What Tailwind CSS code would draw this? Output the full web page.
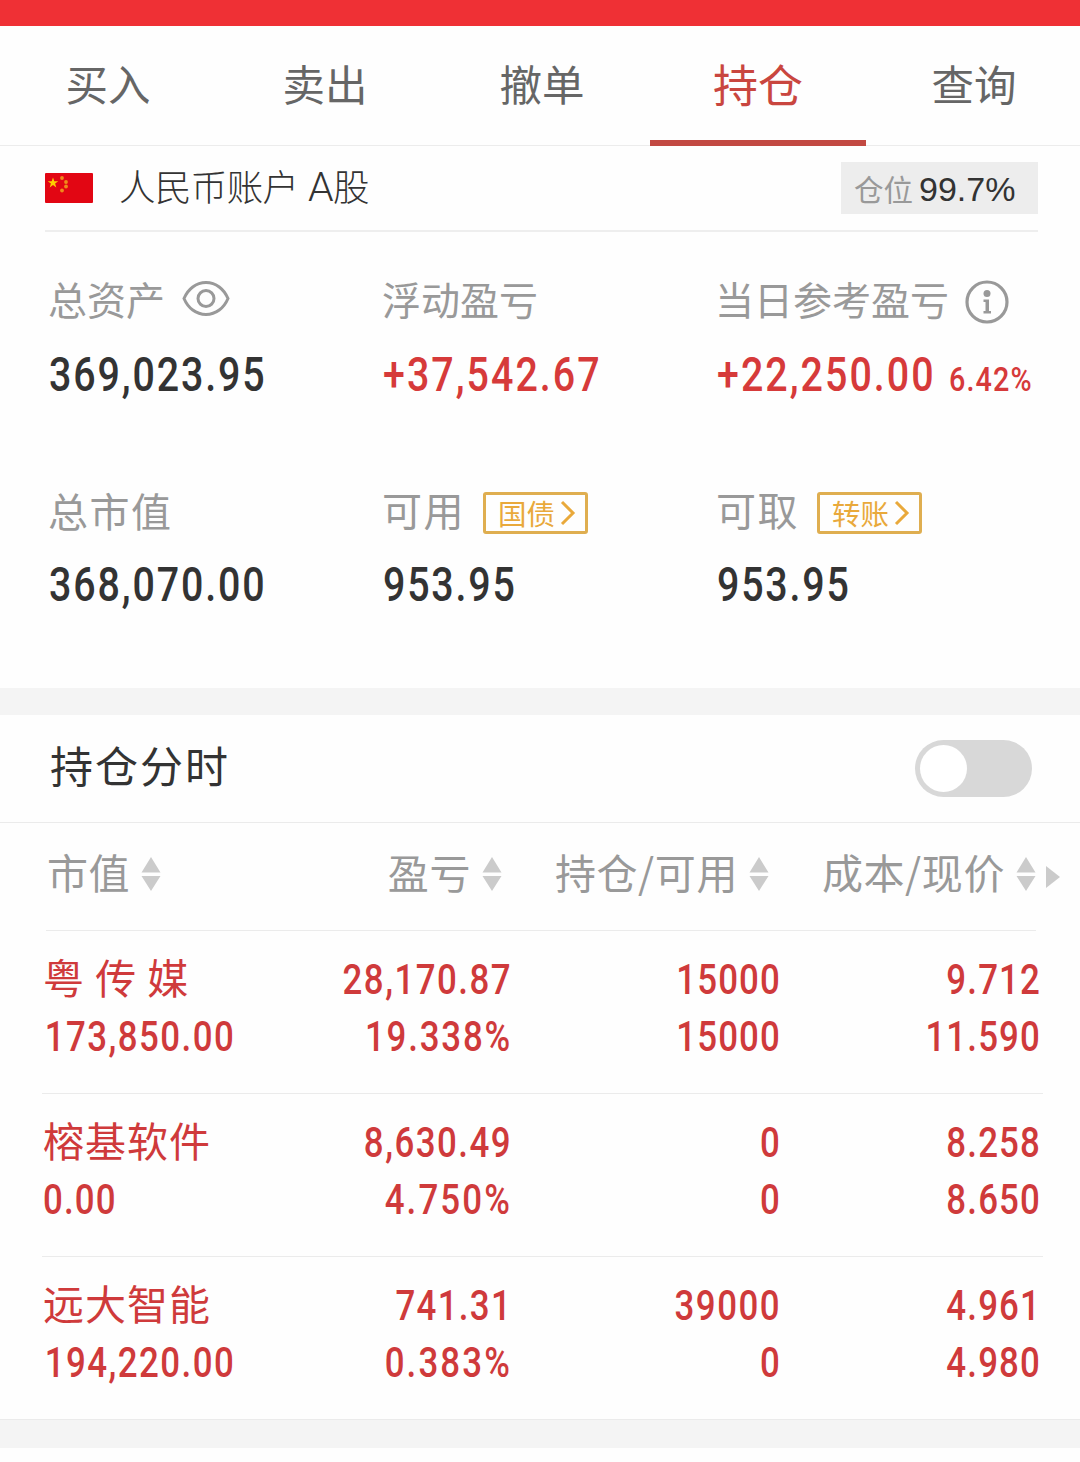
<!DOCTYPE html>
<html lang="zh-CN">
<head>
    <meta charset="UTF-8">
    <meta name="viewport" content="width=device-width, initial-scale=1.0">
    <title>持仓</title>
    <script src="https://cdn.jsdelivr.net/npm/@tailwindcss/browser@4"></script>
</head>
<body class="w-[1080px] h-[1462px] overflow-hidden bg-[#fefefe] font-['Noto_Sans_CJK_SC',sans-serif] text-[#333]">
    <svg class="hidden">
        <symbol id="sort" viewBox="0 0 20 36">
            <path d="M10 1L19.500 16.500H.5zM10 35L.5 20H19.500z" fill="#cbcbcb" />
        </symbol>
    </svg>

    <div class="h-[26px] bg-[#ef3035]"></div>

    <!-- Tabs -->
    <nav class="h-[120px] grid grid-cols-[216px_218px_216px_216px_1fr] border-b border-[#ececec] text-[42.500px] leading-[113px] text-center text-[#666]">
        <div>买入</div>
        <div>卖出</div>
        <div>撤单</div>
        <div class="h-[120px] border-b-6 border-[#c24942] text-[45px] leading-[115px] text-[#c9463f]">持仓</div>
        <div class="pl-[2px]">查询</div>
    </nav>

    <!-- Account -->
    <div class="ml-[45px] w-[993px] h-[86px] flex items-center border-b-2 border-[#eee]">
        <svg class="w-12 h-[30px]" viewBox="0 0 48 30">
            <rect width="48" height="30" rx="1" fill="#e20613" />
            <path d="M8 4.500l1.300 3.700h4l-3.200 2.400 1.200 3.800L8 12.100l-3.300 2.300 1.200-3.800-3.200-2.400h4z" fill="#fdd000" />
            <g fill="#f08a1a">
                <circle cx="17" cy="5" r="1.900" />
                <circle cx="21" cy="9" r="1.900" />
                <circle cx="21" cy="13.500" r="1.900" />
                <circle cx="17" cy="17.500" r="1.900" />
            </g>
        </svg>
        <div class="ml-[26px] h-[52px] leading-[48px] text-[36.500px] font-light tracking-[-0.6px] whitespace-nowrap">人民币账户 <span class="ml-[2px] font-['Roboto'] text-[41px]">A</span>股</div>
        <div class="ml-auto w-[197px] h-[52px] pl-[13px] flex items-center gap-[6px] bg-[#ededed] whitespace-nowrap">
            <span class="text-[29.5px] leading-[50px] text-[#999]">仓位</span>
            <span class="font-['Liberation_Sans'] text-[34px] leading-[56px] pt-[2px]">99.7%</span>
        </div>
    </div>

    <!-- Assets -->
    <section class="h-[456px] pl-[48px] pt-[41px] grid grid-cols-[334px_334px_1fr] grid-rows-[211px_211px] whitespace-nowrap">
        <div>
            <div class="h-[50px] flex items-center text-[39px] leading-[50px] text-[#999]">总资产
                <svg class="ml-[17px] mt-[2px] w-12 h-[38px]" viewBox="0 0 48 38" fill="none" stroke="#999" stroke-width="3">
                    <path d="M2 18.500C6 9 14 2.500 24 2.500S42 9 46 18.500C42 28 34 34.500 24 34.500S6 28 2 18.500z" />
                    <circle cx="24" cy="18.500" r="8" />
                </svg>
            </div>
            <div class="mt-[22px] ml-px h-[60px] leading-[60px] text-[48px] font-medium font-['Roboto'] tracking-[2.3px] origin-left scale-x-[0.82]">369,023.95</div>
        </div>
        <div>
            <div class="h-[50px] text-[39px] leading-[50px] text-[#999]">浮动盈亏</div>
            <div class="mt-[22px] ml-px h-[60px] leading-[60px] text-[48px] font-medium font-['Roboto'] tracking-[2.5px] origin-left scale-x-[0.82] text-[#d63a3a]">+37,542.67</div>
        </div>
        <div>
            <div class="h-[50px] -ml-px flex items-center text-[39px] leading-[50px] text-[#999]">当日参考盈亏
                <svg class="ml-[16px] mt-[8px] w-11 h-11" viewBox="0 0 44 44">
                    <circle cx="22" cy="22" r="20" fill="none" stroke="#999" stroke-width="3.200" />
                    <circle cx="22" cy="13.500" r="3.500" fill="#999" />
                    <path d="M18.500 19.500H24V31H26V33.500H18.500V31H20.500V22H18.500z" fill="#999" />
                </svg>
            </div>
            <div class="mt-[22px] ml-px h-[60px] leading-[60px] flex items-baseline font-medium font-['Roboto'] text-[#d63a3a]">
                <span class="w-[232px] text-[48px] tracking-[2.5px] origin-left scale-x-[0.82]">+22,250.00</span>
                <span class="text-[33px] tracking-[1.3px] origin-left scale-x-[0.87]">6.42%</span>
            </div>
        </div>
        <div>
            <div class="h-[50px] text-[40px] leading-[52px] tracking-[1.5px] text-[#999]">总市值</div>
            <div class="mt-[21px] ml-px h-[60px] leading-[60px] text-[48px] font-medium font-['Roboto'] tracking-[2.3px] origin-left scale-x-[0.82]">368,070.00</div>
        </div>
        <div>
            <div class="h-[50px] flex items-center text-[40px] leading-[52px] tracking-[1.5px] text-[#999]">可用
                <span class="ml-[18px] mt-[7px] w-[105px] h-[42px] pl-[12px] flex items-center border-3 border-[#dfae50] rounded-[3px] text-[28.500px] leading-[36px] tracking-normal text-[#e9a93b]">国债
                    <svg class="ml-[5px] w-4 h-[26px]" viewBox="0 0 16 26" fill="none" stroke="#e9a93b" stroke-width="3"><path d="M2 2l11 11L2 24" /></svg>
                </span>
            </div>
            <div class="mt-[21px] ml-px h-[60px] leading-[60px] text-[48px] font-medium font-['Roboto'] tracking-[2.2px] origin-left scale-x-[0.82]">953.95</div>
        </div>
        <div>
            <div class="h-[50px] flex items-center text-[40px] leading-[52px] tracking-[1.5px] text-[#999]">可取
                <span class="ml-[18px] mt-[7px] w-[105px] h-[42px] pl-[12px] flex items-center border-3 border-[#dfae50] rounded-[3px] text-[28.500px] leading-[36px] tracking-normal text-[#e9a93b]">转账
                    <svg class="ml-[5px] w-4 h-[26px]" viewBox="0 0 16 26" fill="none" stroke="#e9a93b" stroke-width="3"><path d="M2 2l11 11L2 24" /></svg>
                </span>
            </div>
            <div class="mt-[21px] ml-px h-[60px] leading-[60px] text-[48px] font-medium font-['Roboto'] tracking-[2.2px] origin-left scale-x-[0.82]">953.95</div>
        </div>
    </section>

    <div class="h-[27px] bg-[#f4f4f4]"></div>

    <!-- Intraday switch -->
    <div class="h-[108px] pl-[50px] pr-[48px] flex items-center justify-between border-b border-[#ebebeb]">
        <div class="text-[43px] leading-[60px] -mt-[10px] tracking-[2px]">持仓分时</div>
        <div class="w-[117px] h-[57px] p-[5px] rounded-full bg-[#d8d8d8]">
            <div class="w-[47px] h-[47px] rounded-full bg-white"></div>
        </div>
    </div>

    <!-- Table head -->
    <div class="h-[107px] pl-[47px] grid grid-cols-[200px_255px_267px_267px_1fr] text-[41px] leading-[97px] tracking-[0.6px] text-[#999] whitespace-nowrap">
        <div class="flex gap-[11px]">市值<svg class="mt-[33px] w-5 h-9"><use href="#sort" /></svg></div>
        <div class="flex gap-[11px] justify-end">盈亏<svg class="mt-[33px] w-5 h-9"><use href="#sort" /></svg></div>
        <div class="flex gap-[11px] justify-end">持仓/可用<svg class="mt-[33px] w-5 h-9"><use href="#sort" /></svg></div>
        <div class="flex gap-[11px] justify-end">成本/现价<svg class="mt-[33px] w-5 h-9"><use href="#sort" /></svg></div>
        <svg class="ml-[10px] mt-[43px] w-[14px] h-[22px]" viewBox="0 0 14 22"><path d="M0 0L14 11L0 22z" fill="#cbcbcb" /></svg>
    </div>
    <div class="ml-[46px] w-[990px] h-px bg-[#ebebeb]"></div>

    <!-- Positions -->
    <div class="ml-[43px] w-[1000px] text-[42.500px] leading-[57px] font-['Roboto'] font-medium tracking-[1.4px] text-[#cf3a3b] whitespace-nowrap">
        <div class="h-[162px] pt-[20px] grid grid-cols-[200px_269px_269px_260px] grid-rows-[57px_57px] text-right">
            <div class="text-left text-[41px] font-normal font-['Noto_Sans_CJK_SC'] -mt-[3px] tracking-[1px]">粤 传 媒</div>
            <div class="origin-right scale-x-[0.82] tracking-[1.8px]">28,170.87</div>
            <div class="origin-right scale-x-[0.82]">15000</div>
            <div class="origin-right scale-x-[0.82]">9.712</div>
            <div class="text-left pl-[2px] origin-left scale-x-[0.82] tracking-[1.8px]">173,850.00</div>
            <div class="origin-right scale-x-[0.82] tracking-[2.2px]">19.338%</div>
            <div class="origin-right scale-x-[0.82]">15000</div>
            <div class="origin-right scale-x-[0.82]">11.590</div>
        </div>
        <div class="-ml-px h-[163px] pt-[20px] pl-px grid grid-cols-[200px_269px_269px_260px] grid-rows-[57px_57px] border-t border-[#ebebeb] text-right">
            <div class="text-left text-[41px] font-normal font-['Noto_Sans_CJK_SC'] -mt-[3px] tracking-[1px]">榕基软件</div>
            <div class="origin-right scale-x-[0.82] tracking-[1.8px]">8,630.49</div>
            <div class="origin-right scale-x-[0.82]">0</div>
            <div class="origin-right scale-x-[0.82]">8.258</div>
            <div class="text-left origin-left scale-x-[0.82]">0.00</div>
            <div class="origin-right scale-x-[0.82] tracking-[2.6px]">4.750%</div>
            <div class="origin-right scale-x-[0.82]">0</div>
            <div class="origin-right scale-x-[0.82]">8.650</div>
        </div>
        <div class="-ml-px h-[163px] pt-[20px] pl-px grid grid-cols-[200px_269px_269px_260px] grid-rows-[57px_57px] border-t border-[#ebebeb] text-right">
            <div class="text-left text-[41px] font-normal font-['Noto_Sans_CJK_SC'] -mt-[3px] tracking-[1px]">远大智能</div>
            <div class="origin-right scale-x-[0.82] tracking-[1.6px]">741.31</div>
            <div class="origin-right scale-x-[0.82] tracking-[1.8px]">39000</div>
            <div class="origin-right scale-x-[0.82]">4.961</div>
            <div class="text-left pl-[2px] origin-left scale-x-[0.82] tracking-[1.8px]">194,220.00</div>
            <div class="origin-right scale-x-[0.82] tracking-[2.6px]">0.383%</div>
            <div class="origin-right scale-x-[0.82]">0</div>
            <div class="origin-right scale-x-[0.82]">4.980</div>
        </div>
    </div>

    <div class="h-[29px] border-t border-[#ebebeb] bg-[#f4f4f4]"></div>
</body>
</html>
